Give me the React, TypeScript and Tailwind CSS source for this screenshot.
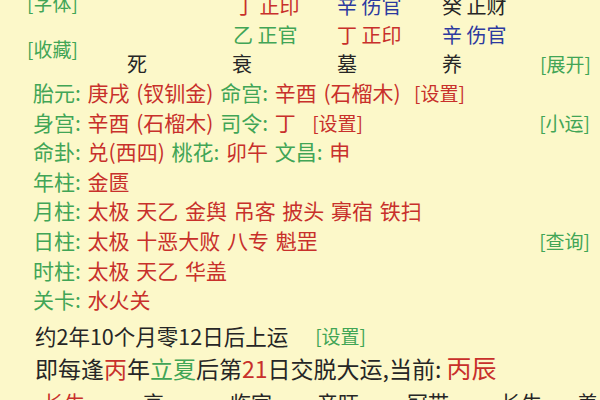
const green = "text-[#41a556]";
const red = "text-[#c8302b]";
const blue = "text-[#2c3a9f]";

type Seg = { t: string; c?: string };

function Line({ segs, right }: { segs: Seg[]; right?: string }) {
  return (
    <div className="flex justify-between pl-[33px] pr-[10px] h-[29.6px] leading-[29.6px] whitespace-pre">
      <div className="[word-spacing:2px]">
        {segs.map((s, i) => (
          <span key={i} className={s.c}>
            {s.t}
          </span>
        ))}
      </div>
      {right && <span className={`text-[19px] ${green}`}>{right}</span>}
    </div>
  );
}

export default function App() {
  return (
    <div className="w-[600px] h-[400px] overflow-hidden bg-[#fcf8c9] text-[#262626] font-['Noto_Sans_CJK_SC',sans-serif]">
      {/* pillars header */}
      <div className="flex -mt-[9px] h-[87px]">
        <div className={`w-[127px] pl-[27px] flex flex-col text-[19px] ${green}`}>
          <span className="leading-[29px] -mt-[3px]">[字体]</span>
          <span className="leading-[29px] mt-[17px]">[收藏]</span>
        </div>
        <div className="grid grid-cols-[105px_105px_105px_98px] auto-rows-[29px] text-[20px] leading-[29px] whitespace-pre">
          <span></span>
          <span className={`pl-[3px] ${red}`}>丁 正印</span>
          <span className={blue}>辛 伤官</span>
          <span>癸 正财</span>
          <span></span>
          <span className={`pl-[1px] ${green}`}>乙 正官</span>
          <span className={red}>丁 正印</span>
          <span className={blue}>辛 伤官</span>
          <span>死</span>
          <span>衰</span>
          <span>墓</span>
          <span>养</span>
        </div>
        <div className="flex flex-col justify-end">
          <span className={`leading-[29px] text-[19px] ${green}`}>[展开]</span>
        </div>
      </div>

      {/* details */}
      <div className="text-[21px]">
        <Line
          segs={[
            { t: "胎元: ", c: green },
            { t: "庚戌 (钗钏金) ", c: red },
            { t: "命宫: ", c: green },
            { t: "辛酉 (石榴木)  ", c: red },
            { t: "[设置]", c: `text-[19px] ${red}` },
          ]}
        />
        <Line
          segs={[
            { t: "身宫: ", c: green },
            { t: "辛酉 (石榴木) ", c: red },
            { t: "司令: ", c: green },
            { t: "丁  ", c: red },
            { t: "[设置]", c: `pl-[3px] text-[19px] ${red}` },
          ]}
          right="[小运]"
        />
        <Line
          segs={[
            { t: "命卦: ", c: green },
            { t: "兑(西四) ", c: red },
            { t: "桃花: ", c: green },
            { t: "卯午 ", c: red },
            { t: "文昌: ", c: green },
            { t: "申", c: red },
          ]}
        />
        <Line segs={[{ t: "年柱: ", c: green }, { t: "金匮", c: red }]} />
        <Line
          segs={[
            { t: "月柱: ", c: green },
            { t: "太极 天乙 金舆 吊客 披头 寡宿 铁扫", c: red },
          ]}
        />
        <Line
          segs={[
            { t: "日柱: ", c: green },
            { t: "太极 十恶大败 八专 魁罡", c: red },
          ]}
          right="[查询]"
        />
        <Line
          segs={[
            { t: "时柱: ", c: green },
            { t: "太极 天乙 华盖", c: red },
          ]}
        />
        <Line segs={[{ t: "关卡: ", c: green }, { t: "水火关", c: red }]} />

        <div className="pl-[35px] mt-[6px] h-[30px] leading-[30px] flex">
          <span className="text-[21.5px]">约2年10个月零12日后上运</span>
          <span className={`ml-[27px] text-[19px] ${green}`}>[设置]</span>
        </div>
        <div className="pl-[35px] mt-[1px] h-[30px] leading-[30px] flex items-baseline whitespace-pre text-[23px]">
          <span>即每逢</span>
          <span className={red}>丙</span>
          <span>年</span>
          <span className={green}>立夏</span>
          <span>后第</span>
          <span className={red}>21</span>
          <span>日交脱大运,当前: </span>
          <span className={`text-[25px] leading-[30px] ${red}`}>丙辰</span>
        </div>

        {/* luck pillars row, cut off at the bottom */}
        <div className="pl-[43px] mt-[5px] h-[30px] leading-[30px] flex whitespace-nowrap">
          <span className={`w-[100px] ${red}`}>长生</span>
          <span className="w-[87px]">衰</span>
          <span className="w-[87px]">临官</span>
          <span className="w-[90px]">帝旺</span>
          <span className="w-[93px]">冠带</span>
          <span className="w-[77px]">长生</span>
          <span>养</span>
        </div>
      </div>
    </div>
  );
}
